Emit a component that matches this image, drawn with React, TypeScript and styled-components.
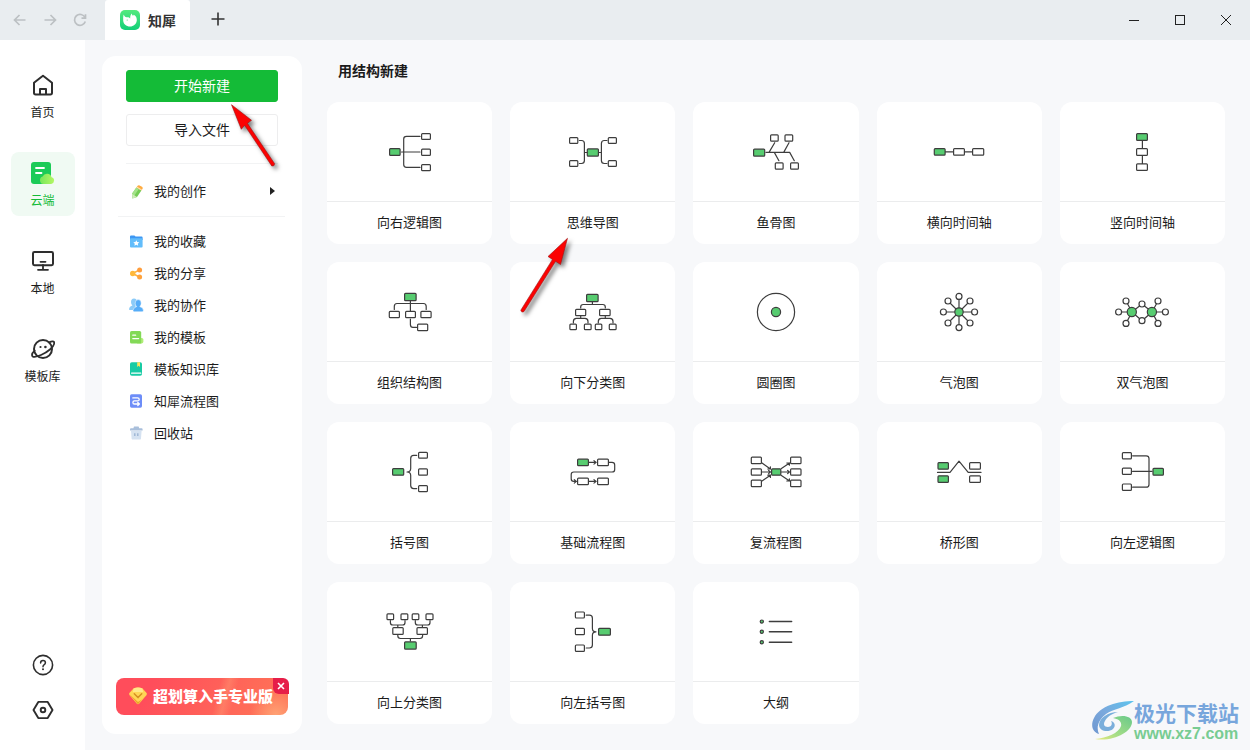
import React from "react";
import styled, { createGlobalStyle } from "styled-components";

const GlobalStyle = createGlobalStyle`
  *, *::before, *::after { box-sizing: border-box; }
  body {
    margin: 0;
    background: #f7f8fa;
    color: #1b1b1b;
    font-family: "Noto Sans CJK SC", "Liberation Sans", sans-serif;
    font-size: 13px;
    line-height: 20px;
  }
  button { font: inherit; color: inherit; border: 0; padding: 0; background: none; cursor: pointer; }
  a { color: inherit; text-decoration: none; }
  svg { display: block; flex: none; }
`;

const Shell = styled.div`
  position: relative;
  display: flex;
  flex-direction: column;
  min-height: 100vh;
`;

/* ---------- title bar ---------- */

const TitleBar = styled.header`
  display: flex;
  height: 40px;
  background: #e9edf0;
`;

const NavButtons = styled.div`
  display: flex;
  align-items: center;
  gap: 14px;
  width: 105px;
  padding-left: 12px;
  color: #bcc0c3;
`;

const Tab = styled.div`
  display: flex;
  align-items: center;
  gap: 8px;
  width: 85px;
  padding-left: 15px;
  border-radius: 3px 3px 0 0;
  background: #fff;
  color: #333;
  font-size: 14px;
  font-weight: 700;
`;

const AddTab = styled.button`
  display: grid;
  place-items: center;
  width: 56px;
  height: 38px;
`;

const WindowButtons = styled.div`
  display: flex;
  margin-left: auto;
  padding-right: 1px;
`;

const WindowButton = styled.button`
  display: grid;
  place-items: center;
  width: 46px;
  height: 40px;
`;

/* ---------- left rail ---------- */

const Body = styled.div`
  display: flex;
  flex: 1;
`;

const Rail = styled.nav`
  display: flex;
  flex-direction: column;
  align-items: center;
  gap: 24px;
  width: 85px;
  padding: 24px 0 28px;
  background: #fff;
`;

const RailItem = styled.a<{ $active?: boolean }>`
  display: flex;
  flex-direction: column;
  align-items: center;
  gap: 5px;
  width: 64px;
  height: 64px;
  padding-top: 9px;
  border-radius: 8px;
  background: ${(p) => (p.$active ? "#f0faf3" : "transparent")};
  color: ${(p) => (p.$active ? "#14bb37" : "#1b1b1b")};
  font-size: 12px;
`;

const RailTools = styled.div`
  display: flex;
  flex-direction: column;
  gap: 21px;
  margin-top: auto;
`;

/* ---------- side panel ---------- */

const Panel = styled.aside`
  display: flex;
  flex-direction: column;
  width: 200px;
  margin: 16px 0 16px 17px;
  padding: 14px 0 19px;
  border-radius: 14px;
  background: #fff;
`;

const Actions = styled.div`
  position: relative;
  display: flex;
  flex-direction: column;
  gap: 12px;
  margin: 0 24px;
  padding-bottom: 17px;
  border-bottom: 1px solid #f2f3f4;
`;

const ActionButton = styled.button<{ $primary?: boolean }>`
  height: 32px;
  padding-bottom: 2px;
  border-radius: 3px;
  border: 1px solid ${(p) => (p.$primary ? "#14bb37" : "#ededee")};
  background: ${(p) => (p.$primary ? "#14bb37" : "#fff")};
  color: ${(p) => (p.$primary ? "#fff" : "#1b1b1b")};
  font-size: 14px;
`;

const MineRow = styled.button`
  display: flex;
  align-items: center;
  gap: 10px;
  height: 53px;
  margin: 0 17px 0 16px;
  padding: 2px 10px 0;
  border-bottom: 1px solid #f2f3f4;
  text-align: left;
`;

const MineLabel = styled.span`
  flex: 1;
`;

const FolderList = styled.ul`
  margin: 0;
  padding: 8px 0 0 26px;
  list-style: none;
`;

const FolderLink = styled.a`
  display: flex;
  align-items: center;
  gap: 10px;
  height: 32px;
`;

const Promo = styled.div`
  position: relative;
  display: flex;
  margin: auto 14px 0;
`;

const PromoLink = styled.a`
  display: flex;
  align-items: center;
  gap: 5px;
  flex: 1;
  height: 37px;
  padding: 0 0 2px 12px;
  border-radius: 8px;
  background:
    linear-gradient(105deg, transparent 58%, rgba(255, 160, 120, 0.4) 63%, transparent 68%),
    radial-gradient(circle at 93% 100%, #ffa274 0, rgba(255, 162, 116, 0) 26px),
    linear-gradient(120deg, #ff4d5b 20%, #ff7257 90%);
  color: #fff;
  font-size: 15px;
  font-weight: 900;
  white-space: nowrap;
`;

const PromoClose = styled.button`
  position: absolute;
  top: 0;
  right: -1px;
  display: grid;
  place-items: center;
  width: 16px;
  height: 16px;
  border-radius: 0 6px 0 6px;
  background: #e61e49;
`;

/* ---------- structure grid ---------- */

const Content = styled.main`
  flex: 1;
  padding: 20px 25px 25px;
`;

const Heading = styled.h1`
  margin: 0 0 22px;
  padding-left: 11px;
  font-size: 14px;
  line-height: 20px;
  font-weight: 700;
`;

const Grid = styled.div`
  display: grid;
  grid-template-columns: repeat(5, minmax(0, 1fr));
  gap: 18px;
`;

const CardSlot = styled.div`
  position: relative;
`;

const Card = styled.button`
  display: flex;
  flex-direction: column;
  width: 100%;
  border-radius: 12px;
  background: #fff;
`;

const CardArt = styled.span`
  display: grid;
  place-items: center;
  width: 100%;
  height: 100px;
  border-bottom: 1px solid #ebeced;
`;

const CardName = styled.span`
  width: 100%;
  padding-bottom: 2px;
  line-height: 40px;
`;

/* ---------- overlays ---------- */

const PointerUp = styled.svg`
  position: absolute;
  z-index: 2;
  top: 32px;
  left: 102px;
  pointer-events: none;
`;

const PointerCard = styled.svg`
  position: absolute;
  z-index: 2;
  top: 132px;
  left: 7px;
  pointer-events: none;
`;

const Watermark = styled.div`
  position: absolute;
  right: 11px;
  bottom: 7px;
  display: flex;
  align-items: center;
  pointer-events: none;
`;

const WatermarkName = styled.div`
  color: #77a6dc;
  font-size: 21px;
  line-height: 26px;
  font-weight: 700;
`;

const WatermarkSite = styled.div`
  color: #78cc92;
  font-family: "Liberation Sans", sans-serif;
  font-size: 16px;
  line-height: 18px;
  font-weight: 700;
`;

/* ---------- diagram thumbnails ---------- */

const INK = "#3d3d3d";
const LEAF = "#57cc70";

type Bounds = [number, number, number, number];

/* Rounded node given by its outer left, top, right and bottom edges. */
const Node = ({ at: [l, t, r, b], on }: { at: Bounds; on?: boolean }) => (
  <rect x={l + 0.6} y={t + 0.6} width={r - l - 1.2} height={b - t - 1.2} rx="0.9" fill={on ? LEAF : "#fff"} />
);

const Dot = ({ x, y, r = 3, on }: { x: number; y: number; r?: number; on?: boolean }) => (
  <circle cx={x} cy={y} r={r} fill={on ? LEAF : "#fff"} />
);

interface Diagram {
  name: string;
  lines?: string;
  main?: Bounds[];
  nodes?: Bounds[];
  extra?: React.ReactNode;
}

const spokes = [
  [0, -15.6], [11, -11], [15.6, 0], [11, 11], [0, 15.6], [-11, 11], [-15.6, 0], [-11, -11],
];

const diagrams: Diagram[] = [
  {
    name: "向右逻辑图",
    lines: "M23.5 26H42M42 10.4H28.5Q25.7 10.4 25.7 13V38.6Q25.7 41.4 28.5 41.4H42",
    main: [[11, 22, 22.7, 30]],
    nodes: [[43, 7, 53, 14], [43, 22.6, 53, 30], [43, 38, 53, 45.3]],
  },
  {
    name: "思维导图",
    lines: "M18.3 14.5H20.5Q23.4 14.5 23.4 17.4V34.6Q23.4 37.5 20.5 37.5H18.3M23.4 26.5H26M46 14.5H43.3Q40.4 14.5 40.4 17.4V34.6Q40.4 37.5 43.3 37.5H46M38 26.5H40.4",
    main: [[25.7, 22.3, 38, 30.7]],
    nodes: [[8, 11, 17.4, 18], [8, 34, 17.4, 41], [46.7, 11, 56, 18], [46.7, 34, 56, 41]],
  },
  {
    name: "鱼骨图",
    lines: "M22 26.4H45.7L50.3 34.7M30.7 16.7L25 26.4M45 16.7L39.7 26.4M30.3 26.4L34.9 34.7",
    main: [[9, 22.6, 21.3, 30.7]],
    nodes: [[26, 8.3, 34.8, 15.7], [40.4, 8.3, 49.3, 15.7], [30.7, 36.3, 39.7, 43.7], [46, 36.3, 55, 43.7]],
  },
  {
    name: "横向时间轴",
    lines: "M18 25.8H45",
    main: [[6.7, 22, 18.7, 29.7]],
    nodes: [[26, 22, 38, 29.7], [45, 22, 57.3, 29.7]],
  },
  {
    name: "竖向时间轴",
    lines: "M32.4 14V38",
    main: [[26, 7, 38, 15]],
    nodes: [[26, 22, 38, 30], [26, 37.3, 38, 45]],
  },
  {
    name: "组织结构图",
    lines: "M16.3 23.4V20.5Q16.3 17.5 19 17.5H45.5Q48.2 17.5 48.2 20.5V23.4M32.4 15V25M32.4 33V38.5Q32.4 41.4 35 41.4H38.5",
    main: [[26, 6.7, 38.7, 15.3]],
    nodes: [[10.7, 24.7, 22, 32.3], [27, 24.7, 38, 32.3], [42.3, 24.7, 53.7, 32.3], [39, 37.6, 50.3, 45.3]],
  },
  {
    name: "向下分类图",
    lines: "M19.7 22V21Q19.7 18.5 22.2 18.5H41.8Q44.3 18.5 44.3 21V22M31.4 16V18.5M12.4 37V35.5Q12.4 32.4 15.4 32.4H24Q27 32.4 27 35.5V37M37.3 37V35.5Q37.3 32.4 40.3 32.4H49Q52 32.4 52 35.5V37M19.7 30V32.4M44.3 30V32.4",
    main: [[25, 7.7, 37.7, 16.3]],
    nodes: [[14, 22.7, 25.3, 30.3], [38, 22.7, 49.7, 30.3], [8.3, 37.6, 16, 44.2], [22.8, 37.6, 30.7, 44.2], [33.7, 37.6, 41.4, 44.2], [47.7, 37.6, 55.7, 44.2]],
  },
  {
    name: "圆圈图",
    extra: (
      <>
        <Dot x={32} y={26} r={18.6} />
        <Dot x={32} y={26} r={4.6} on />
      </>
    ),
  },
  {
    name: "气泡图",
    extra: (
      <>
        {spokes.map(([dx, dy]) => (
          <g key={`${dx},${dy}`}>
            <path d={`M32 26l${dx} ${dy}`} />
            <Dot x={32 + dx} y={26 + dy} />
          </g>
        ))}
        <Dot x={32} y={26} r={4.2} on />
      </>
    ),
  },
  {
    name: "双气泡图",
    lines: "M8.6 26H21.8M42 26H55.4M16 15L22 26L16 37.4M48 15L42 26L48 37.4M22 26L32 18L42 26L32 34.7Z",
    extra: (
      <>
        <Dot x={8.6} y={26} />
        <Dot x={16} y={15} />
        <Dot x={16} y={37.4} />
        <Dot x={32} y={18} />
        <Dot x={32} y={34.7} />
        <Dot x={48} y={15} />
        <Dot x={48} y={37.4} />
        <Dot x={55.4} y={26} />
        <Dot x={21.8} y={26} r={4.6} on />
        <Dot x={41.9} y={26} r={4.6} on />
      </>
    ),
  },
  {
    name: "括号图",
    lines: "M38.7 9.4H35.7Q32.7 9.4 32.7 12.4V22.5Q32.7 26 29 26Q32.7 26 32.7 29.5V39.6Q32.7 42.6 35.7 42.6H38.7",
    main: [[14, 22, 26.3, 29.8]],
    nodes: [[40, 5.7, 50, 12.8], [40, 22.3, 50, 29.8], [40, 39, 50, 46.3]],
  },
  {
    name: "基础流程图",
    lines: "M28 16.4H35M33 14.7L35.2 16.4L33 18.1M28 35.4H35M33 33.7L35.2 35.4L33 37.1M48 16.4H51Q53.7 16.4 53.7 19V23.4Q53.7 26 51 26H12.8Q10.2 26 10.2 28.6V32.8Q10.2 35.4 12.8 35.4H15.4M13.3 33.7L15.4 35.4L13.3 37.1",
    main: [[16, 12.6, 28, 20.2]],
    nodes: [[36, 12.6, 48, 20.2], [16, 31.6, 28, 39.3], [36, 31.6, 48, 39.3]],
  },
  {
    name: "复流程图",
    lines: "M18 17L26.4 23M26.4 20.8V23H23.8M18 26H26.4M24.6 24.4L26.4 26L24.6 27.6M18 35L26.4 29.2M26.4 31.4V29.2H23.8M37.4 22.6L45.6 17M45.4 19.2V17H42.8M37.4 26H45.4M43.6 24.4L45.4 26L43.6 27.6M37.4 29.4L45.6 35M45.4 32.8V35H42.8",
    main: [[27, 22.2, 37.4, 29.8]],
    nodes: [[6.7, 10.6, 18, 18.2], [6.7, 22.2, 18, 29.8], [6.7, 33.6, 18, 41.2], [46, 10.6, 57.6, 18.2], [46, 22.2, 57.6, 29.8], [46, 33.6, 57.6, 41.2]],
  },
  {
    name: "桥形图",
    lines: "M10.5 26.4H23L32 15.2L41.2 26.4H54",
    main: [[10.4, 16, 22, 23.8], [10.4, 29.2, 22, 37]],
    nodes: [[42, 16, 54, 23.8], [42, 29.2, 54, 37]],
  },
  {
    name: "向左逻辑图",
    lines: "M22.6 25.4H42M22.6 9.8H36.2Q39 9.8 39 12.6V38.4Q39 41.2 36.2 41.2H22.6",
    main: [[42.4, 21.7, 54, 29.8]],
    nodes: [[11.8, 6, 22, 13.4], [11.8, 21.5, 22, 29], [11.8, 37.4, 22, 45]],
  },
  {
    name: "向上分类图",
    lines: "M12.4 14.6V16.4Q12.4 19 15 19H24.4Q27 19 27 16.4V14.6M37.3 14.6V16.4Q37.3 19 40 19H49.4Q52 19 52 16.4V14.6M19.8 19V21M44.4 19V21M19.8 29V29.8Q19.8 32.5 22.5 32.5H42Q44.6 32.5 44.6 29.8V29M32.4 32.5V35",
    main: [[26, 35.3, 38.8, 43.7]],
    nodes: [[8.4, 7.3, 16.2, 14.2], [22.4, 7.3, 30.4, 14.2], [33.6, 7.3, 41.4, 14.2], [47.4, 7.3, 55.6, 14.2], [14.2, 21, 25.8, 29], [38.4, 21, 50, 29]],
  },
  {
    name: "向左括号图",
    lines: "M25.2 9.2H28.4Q31.4 9.2 31.4 12.2V22.5Q31.4 25.8 35 25.8Q31.4 25.8 31.4 29.2V39Q31.4 42 28.4 42H25.2",
    main: [[37, 21.7, 50, 29.8]],
    nodes: [[13.8, 5.4, 24, 12.6], [13.8, 21.7, 24, 29.2], [13.8, 38.4, 24, 46]],
  },
  {
    name: "大纲",
    extra: (
      <>
        {[15.6, 25.8, 36.2].map((y) => (
          <g key={y}>
            <Dot x={17.8} y={y} r={1.6} on />
            <path d={`M25.4 ${y}H47.6`} strokeWidth="1.5" />
          </g>
        ))}
      </>
    ),
  },
];

const Thumbnail = ({ lines, main = [], nodes = [], extra }: Diagram) => (
  <svg width="64" height="51" viewBox="0 0 64 51" fill="none" stroke={INK} strokeWidth="1.2" strokeLinecap="round" strokeLinejoin="round" aria-hidden="true">
    {lines && <path d={lines} />}
    {nodes.map((n) => <Node key={n.join()} at={n} />)}
    {main.map((n) => <Node key={n.join()} at={n} on />)}
    {extra}
  </svg>
);

/* ---------- small icons ---------- */

const Glyph = ({ size, children }: { size: number; children: React.ReactNode }) => (
  <svg width={size} height={size} viewBox={`0 0 ${size} ${size}`} fill="none" aria-hidden="true">{children}</svg>
);

const LogoMark = () => (
  <Glyph size={20}>
    <defs>
      <linearGradient id="logo" x1="0" y1="0" x2="0" y2="1">
        <stop offset="0" stopColor="#54ea7e" />
        <stop offset="1" stopColor="#12cf78" />
      </linearGradient>
    </defs>
    <rect width="20" height="20" rx="5" fill="url(#logo)" />
    <path d="M3.6 4.6C4.4 6.4 5.4 7.4 7 7.2C8.4 7 9.4 7.6 10.2 8.4C10 6.6 10.6 4.8 11.8 3.4C12 4.6 12.4 5.4 13 5.8L13.8 4.8C16 6 17 8 16.8 10.4C16.4 14 13.6 16.4 10 16.4C6.2 16.4 3.4 14 3.2 10.4C3 8.4 3.2 6.4 3.6 4.6Z" fill="#fff" />
    <circle cx="7.2" cy="10" r=".6" fill="#3bd97a" />
  </Glyph>
);

const HomeIcon = () => (
  <Glyph size={24}>
    <path d="M3 9.8L11.3 3.2Q12 2.6 12.7 3.2L21 9.8V19.8Q21 21.4 19.4 21.4H4.6Q3 21.4 3 19.8Z" stroke="#2e2e2e" strokeWidth="2" strokeLinejoin="round" />
    <path d="M9 21V16H15V21" stroke="#2e2e2e" strokeWidth="2" strokeLinejoin="round" />
  </Glyph>
);

const CloudDocIcon = () => (
  <Glyph size={24}>
    <defs>
      <linearGradient id="cloud" x1="0" y1="0" x2="1" y2="0">
        <stop offset="0" stopColor="#77e65a" />
        <stop offset="1" stopColor="#b4f765" />
      </linearGradient>
    </defs>
    <rect y="1" width="20" height="22" rx="3" fill="#1bcb57" />
    <path d="M5 7H13M5 12H10.5" stroke="#fff" strokeWidth="1.8" strokeLinecap="round" />
    <path d="M12.5 23A3.8 3.8 0 0 1 11.6 15.6A4.8 4.8 0 0 1 20.6 16.2A3.5 3.5 0 0 1 20.2 23Z" fill="url(#cloud)" />
  </Glyph>
);

const MonitorIcon = () => (
  <Glyph size={24}>
    <rect x="2" y="3" width="20" height="13.2" rx="1.4" stroke="#2e2e2e" strokeWidth="2" />
    <path d="M9.5 12.8H14.5M12 16V20.6M7 20.8H17" stroke="#2e2e2e" strokeWidth="1.8" strokeLinecap="round" />
  </Glyph>
);

const PlanetIcon = () => (
  <Glyph size={24}>
    <circle cx="12" cy="12" r="9" stroke="#2e2e2e" strokeWidth="2" />
    <path d="M18 5.6C21 3.8 23.4 3.8 23.2 6.2C22.9 10 16.5 15.2 10 18C5 20.2 1 20.6 1 18C1 16.6 2 15 3.6 13.6" stroke="#2e2e2e" strokeWidth="1.8" strokeLinecap="round" />
    <circle cx="9.5" cy="10" r="1.1" fill="#2e2e2e" />
    <circle cx="14.4" cy="10" r="1.3" fill="#2e2e2e" />
  </Glyph>
);

const HelpIcon = () => (
  <Glyph size={24}>
    <circle cx="12" cy="12" r="9.6" stroke="#2e2e2e" strokeWidth="1.6" />
    <path d="M9.6 10Q9.6 7.5 12 7.5Q14.4 7.5 14.4 9.7Q14.4 11 13 11.8Q12 12.4 12 13.8" stroke="#2e2e2e" strokeWidth="1.5" strokeLinecap="round" />
    <circle cx="12" cy="16.2" r="1" fill="#2e2e2e" />
  </Glyph>
);

const SettingsIcon = () => (
  <Glyph size={24}>
    <path d="M7.3 3.9H16.7L21.5 12L16.7 20.1H7.3L2.5 12Z" stroke="#2e2e2e" strokeWidth="1.9" strokeLinejoin="round" />
    <circle cx="12" cy="12" r="2.3" stroke="#2e2e2e" strokeWidth="1.9" />
  </Glyph>
);

const PencilIcon = () => (
  <Glyph size={16}>
    <path d="M8.4 4.6L13.4 7.6L9 14L4.4 15.6L4 10.8Z" fill="#74cc55" />
    <path d="M8.4 4.6L10.8 6L6.4 12.4L4 10.8Z" fill="#a3e288" />
    <path d="M4 10.8L9 14L4.4 15.6Z" fill="#cfebba" />
    <path d="M8.4 4.6L9.6 2.8Q10.4 1.8 11.6 2.4L14 3.8Q15.200 4.600 14.6 5.8L13.4 7.6Z" fill="#ffab40" />
    <path d="M8.800 4L13.800 7" stroke="#fff1d8" strokeWidth=".8" />
  </Glyph>
);

const folders: { label: string; icon: React.ReactNode }[] = [
  {
    label: "我的收藏",
    icon: (
      <>
        <path d="M2 3.4Q2 2.4 3 2.4H6.4L7.6 3.6H13.6Q14.6 3.6 14.6 4.6V7H2Z" fill="#3d97f3" />
        <rect x="2" y="5.3" width="12.6" height="9.3" rx="1" fill="#62bdfb" />
        <path d="M8.3 7.2L9.2 9.1L11.3 9.3L9.8 10.7L10.2 12.8L8.3 11.8L6.4 12.8L6.8 10.7L5.3 9.3L7.4 9.1Z" fill="#fff" />
      </>
    ),
  },
  {
    label: "我的分享",
    icon: (
      <>
        <path d="M4.6 8.5L11.5 4.8M4.6 8.5L11.5 12" stroke="#ffb13d" strokeWidth="1.5" />
        <circle cx="4.7" cy="8.5" r="2.7" fill="#ffb83a" />
        <circle cx="11.6" cy="4.9" r="2.5" fill="#ff9d3c" />
        <circle cx="11.6" cy="12" r="2.5" fill="#ffa23c" />
      </>
    ),
  },
  {
    label: "我的协作",
    icon: (
      <>
        <path d="M3 5Q3 1.5 6 1.5Q9 1.5 9 5Q9 7.5 7.6 8.4V13H1.2Q.6 10 4.4 8.6Q3 7.4 3 5Z" fill="#8ccbf8" />
        <path d="M7.2 6.2Q7.2 2.6 10.2 2.6Q13.2 2.6 13.2 6.2Q13.2 8.5 11.8 9.6Q15.6 10.8 15.4 13.6Q15.4 14.8 14.2 14.8H6.2Q5 14.8 5 13.6Q5 10.8 8.6 9.6Q7.2 8.4 7.2 6.2Z" fill="#56adf8" stroke="#fff" strokeWidth=".5" />
      </>
    ),
  },
  {
    label: "我的模板",
    icon: (
      <>
        <path d="M11 9H13.8Q15.4 9 15.4 10.6V12.5Q15.4 14.6 13.4 14.6H9Z" fill="#b1ed78" />
        <path d="M2 3.5Q2 1.9 3.6 1.9H11.6Q13.2 1.9 13.2 3.5V14.6H3.6Q2 14.6 2 13Z" fill="#83d957" />
        <path d="M4.8 6.2H7.6M4.8 9.6H10.6" stroke="#fff" strokeWidth="1.3" strokeLinecap="round" />
      </>
    ),
  },
  {
    label: "模板知识库",
    icon: (
      <>
        <rect x="2" y="1.3" width="12" height="13.4" rx="1.8" fill="#18cba4" />
        <path d="M3.6 12.2H12.8" stroke="#fff" strokeWidth="1.2" strokeLinecap="round" />
        <path d="M9.2 1.3H12V6L10.6 4.8L9.2 6Z" fill="#ffe45c" />
      </>
    ),
  },
  {
    label: "知犀流程图",
    icon: (
      <>
        <rect x="2" y="1.3" width="12" height="13.4" rx="1.6" fill="#6d8df8" />
        <path d="M4.8 4.9H9.6Q11.2 4.9 11.2 6.4Q11.2 7.9 9.6 7.9H6.4Q4.9 7.9 4.9 9.4Q4.9 11 6.4 11H11.4M9.8 9.5L11.4 11L9.8 12.5" stroke="#fff" strokeWidth="1.3" strokeLinecap="round" strokeLinejoin="round" />
      </>
    ),
  },
  {
    label: "回收站",
    icon: (
      <>
        <path d="M3 6H13.6L13 13.4Q12.9 14.6 11.6 14.6H5Q3.7 14.6 3.6 13.4Z" fill="#d5e2f1" />
        <path d="M2 4.2Q2 3.3 3 3.3H5.4L6 1.6H10.6L11.2 3.3H13.6Q14.6 3.3 14.6 4.2V5.6H2Z" fill="#a9bfdb" />
        <path d="M6.8 8.3V11M9.8 8.3V11" stroke="#9ab2d2" strokeWidth="1.3" />
      </>
    ),
  },
];

const GemIcon = () => (
  <Glyph size={20}>
    <path d="M5.5 2.6Q10 .6 14.5 2.6L18.6 7Q19.2 8 18.6 9L11.3 17.6Q10 18.8 8.7 17.6L1.4 9Q.8 8 1.4 7Z" fill="#ffd655" />
    <path d="M1.2 8L10 18.3L18.8 8L14.4 13.3L10 16Z" fill="#e9a32a" />
    <path d="M5.5 2.6Q10 .6 14.5 2.6L15 6H5Z" fill="#ffe98a" />
    <path d="M6.3 7.8L10 11.6L13.7 7.8" stroke="#d68f22" strokeWidth="1.5" strokeLinecap="round" strokeLinejoin="round" />
  </Glyph>
);

const Swirl = () => (
  <svg width="43" height="40" viewBox="0 0 43 40" fill="none" aria-hidden="true">
    <defs>
      <linearGradient id="swirlBlue" x1="1" y1="0" x2="0" y2="1">
        <stop offset="0" stopColor="#5cc4ee" />
        <stop offset=".5" stopColor="#7aa9dd" />
        <stop offset="1" stopColor="#6f97cf" />
      </linearGradient>
      <linearGradient id="swirlGreen" x1="1" y1="0" x2="0" y2="1">
        <stop offset="0" stopColor="#68c98a" />
        <stop offset=".6" stopColor="#a5dd87" />
        <stop offset="1" stopColor="#e9ea7e" />
      </linearGradient>
    </defs>
    <path d="M43 0C27 0 9 5 3 17C-1 25 2 31 8 33C5 27 7 19 15 13C22 8 34 7 43 0Z" fill="url(#swirlBlue)" />
    <path d="M27 11C17 11 8 17 8 24C8 30 17 32 22 28C25 25 24 21 20 20C22 23 20 26 17 26C13 26 12 23 14 20C16 16 20 13 27 11Z" fill="#7aaedb" />
    <path d="M22 17C31 13 41 15 41 21C41 31 22 41 4 38C16 37 28 32 30 25C31 21 28 18 22 17Z" fill="url(#swirlGreen)" />
  </svg>
);

export default function App() {
  return (
    <>
      <GlobalStyle />
      <Shell>
        <TitleBar>
          <NavButtons>
            <button aria-label="后退">
              <Glyph size={16}><path d="M13.5 8H2.5M7.5 3L2.5 8L7.5 13" stroke="currentColor" strokeWidth="1.7" /></Glyph>
            </button>
            <button aria-label="前进">
              <Glyph size={16}><path d="M2.5 8H13.5M8.5 3L13.5 8L8.5 13" stroke="currentColor" strokeWidth="1.7" /></Glyph>
            </button>
            <button aria-label="刷新">
              <Glyph size={16}><path d="M13 5.5A5.5 5.5 0 1 0 13.3 9.5M13.5 2.2V6.2H9.5" stroke="currentColor" strokeWidth="1.7" /></Glyph>
            </button>
          </NavButtons>
          <Tab>
            <LogoMark />
            知犀
          </Tab>
          <AddTab aria-label="新标签页">
            <Glyph size={14}><path d="M7 .5V13.5M.5 7H13.5" stroke="#333" strokeWidth="1.6" /></Glyph>
          </AddTab>
          <WindowButtons>
            <WindowButton aria-label="最小化">
              <Glyph size={10}><path d="M0 5.5H10" stroke="#222" /></Glyph>
            </WindowButton>
            <WindowButton aria-label="最大化">
              <Glyph size={10}><rect x=".5" y=".5" width="9" height="9" stroke="#222" /></Glyph>
            </WindowButton>
            <WindowButton aria-label="关闭">
              <Glyph size={10}><path d="M0 0L10 10M10 0L0 10" stroke="#222" /></Glyph>
            </WindowButton>
          </WindowButtons>
        </TitleBar>

        <Body>
          <Rail>
            <RailItem href="#home"><HomeIcon />首页</RailItem>
            <RailItem href="#cloud" $active><CloudDocIcon />云端</RailItem>
            <RailItem href="#local"><MonitorIcon />本地</RailItem>
            <RailItem href="#templates"><PlanetIcon />模板库</RailItem>
            <RailTools>
              <button aria-label="帮助"><HelpIcon /></button>
              <button aria-label="设置"><SettingsIcon /></button>
            </RailTools>
          </Rail>

          <Panel>
            <Actions>
              <ActionButton $primary>开始新建</ActionButton>
              <ActionButton>导入文件</ActionButton>
              <PointerUp width="60" height="76" viewBox="0 0 60 76" aria-hidden="true">
                <g style={{ filter: "drop-shadow(3px 3px 2px rgba(0,0,0,.5))" }}>
                  <path d="M3.5 2.7L23.5 18.3L19.4 21.3L46.6 61.7Q46.5 64.5 43.8 64L16.6 23.3L13.3 27.3Z" fill="#fb0202" stroke="#9d1212" strokeWidth=".6" />
                </g>
              </PointerUp>
            </Actions>
            <MineRow>
              <PencilIcon />
              <MineLabel>我的创作</MineLabel>
              <svg width="5" height="8" viewBox="0 0 5 8" aria-hidden="true"><path d="M0 0L5 4L0 8Z" fill="#222" /></svg>
            </MineRow>
            <FolderList>
              {folders.map((f) => (
                <li key={f.label}>
                  <FolderLink href="#folder"><Glyph size={16}>{f.icon}</Glyph>{f.label}</FolderLink>
                </li>
              ))}
            </FolderList>
            <Promo>
              <PromoLink href="#pro"><GemIcon />超划算入手专业版</PromoLink>
              <PromoClose aria-label="关闭广告">
                <Glyph size={8}><path d="M1 1L7 7M7 1L1 7" stroke="#fff" strokeWidth="1.6" /></Glyph>
              </PromoClose>
            </Promo>
          </Panel>

          <Content>
            <Heading>用结构新建</Heading>
            <Grid>
              {diagrams.map((d) => (
                <CardSlot key={d.name}>
                  <Card>
                    <CardArt><Thumbnail {...d} /></CardArt>
                    <CardName>{d.name}</CardName>
                  </Card>
                  {d.name === "思维导图" && (
                    <PointerCard width="64" height="86" viewBox="0 0 64 86" aria-hidden="true">
                      <g style={{ filter: "drop-shadow(3px 3px 2px rgba(0,0,0,.5))" }}>
                        <path d="M50.5 4.3L43.5 30.5L38.6 27.3L7 77.5Q4.3 79 3.8 76.2L35.5 25.4L31 22.5Z" fill="#fb0202" stroke="#9d1212" strokeWidth=".6" />
                      </g>
                    </PointerCard>
                  )}
                </CardSlot>
              ))}
            </Grid>
          </Content>
        </Body>

        <Watermark>
          <Swirl />
          <div>
            <WatermarkName>极光下载站</WatermarkName>
            <WatermarkSite>www.xz7.com</WatermarkSite>
          </div>
        </Watermark>
      </Shell>
    </>
  );
}
